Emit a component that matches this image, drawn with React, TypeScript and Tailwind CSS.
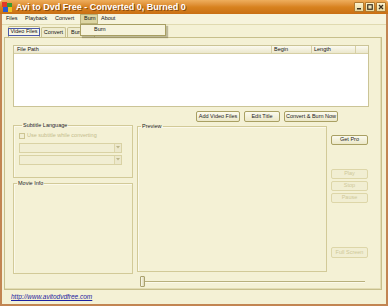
import React from "react";

const btn =
  "h-[10px] flex items-center justify-center whitespace-nowrap rounded-[2px] border border-[#a9a063] bg-gradient-to-b from-[#fbfaee] to-[#ece8c8] text-[5.5px] leading-none text-[#222]";
const btnOff =
  "h-[10px] flex items-center justify-center whitespace-nowrap rounded-[2px] border border-[#ddd6a8] bg-[#f1eed2] text-[5.5px] leading-none text-[#cfc898]";

function AppIcon() {
  return (
    <svg width="11" height="11" viewBox="0 0 11 11">
      <rect x="0" y="0" width="5" height="5" fill="#e03a2a" />
      <rect x="5" y="1" width="5" height="4" fill="#3a9a30" />
      <rect x="1" y="5" width="5" height="5" fill="#2a5ad0" />
      <rect x="6" y="5" width="4" height="5" fill="#f0c020" />
    </svg>
  );
}

function WinButton({ kind }: { kind: "min" | "max" | "close" }) {
  return (
    <div className="w-[10px] h-[10px] flex items-center justify-center rounded-[1px] border border-[#b07a30] bg-gradient-to-b from-[#fbf3cf] to-[#e8d79c]">
      <svg width="6" height="6" viewBox="0 0 6 6">
        {kind === "min" && <rect x="1" y="4" width="4" height="1.5" fill="#3a3020" />}
        {kind === "max" && <rect x="0.75" y="0.75" width="4.5" height="4.5" fill="none" stroke="#3a3020" strokeWidth="1.2" />}
        {kind === "close" && <path d="M1 1L5 5M5 1L1 5" stroke="#3a3020" strokeWidth="1.3" />}
      </svg>
    </div>
  );
}

function Legend({ children }: { children: React.ReactNode }) {
  return <legend className="ml-[3px] px-[1px] text-[5.5px] leading-none text-[#222] whitespace-nowrap">{children}</legend>;
}

function Combo() {
  return (
    <div className="w-[103px] h-[10px] flex border border-[#d9d2a4] bg-[#f1eed3]">
      <div className="flex-1" />
      <div className="w-[7px] flex items-center justify-center border-l border-[#ddd6aa] bg-[#ece8cc]">
        <svg width="4" height="3" viewBox="0 0 4 3">
          <path d="M0 0H4L2 2.5Z" fill="#bdb68a" />
        </svg>
      </div>
    </div>
  );
}

export default function App() {
  const menu = [
    { label: "Files", w: "w-[19px]" },
    { label: "Playback", w: "w-[30px]" },
    { label: "Convert", w: "w-[28px]" },
    { label: "Burn", w: "w-[18px]", active: true },
    { label: "About", w: "w-[22px]" },
  ];

  return (
    <div className="w-[388px] h-[306px] flex flex-col font-['Liberation_Sans',Arial,sans-serif] select-none whitespace-nowrap">
      {/* title bar */}
      <div className="h-[14px] flex items-center pl-[2px] pr-[2px] rounded-t-[3px] bg-gradient-to-b from-[#eeae5c] via-[#d8831f] to-[#c96f14]">
        <AppIcon />
        <span className="ml-[3px] text-[9px] font-bold leading-none text-white [text-shadow:1px_1px_0_#8a4a0a]">
          Avi to Dvd Free - Converted 0, Burned 0
        </span>
        <div className="ml-auto flex gap-[1px]">
          <WinButton kind="min" />
          <WinButton kind="max" />
          <WinButton kind="close" />
        </div>
      </div>

      <div className="relative flex-1 flex flex-col border-x-2 border-b-2 border-[#c28552] bg-[#f4f1d5]">
        {/* menu */}
        <div className="h-[11px] flex items-stretch pl-[1px] border-b border-[#e0dab0] bg-[#f6f3dc]">
          {menu.map((m) => (
            <div
              key={m.label}
              className={`${m.w} flex items-center pl-[3px] text-[5.5px] leading-none text-[#111] ${
                m.active ? "bg-[#dcd5a2] border border-[#b9b078]" : ""
              }`}
            >
              {m.label}
            </div>
          ))}
        </div>

        {/* dropdown */}
        <div className="absolute left-[78px] top-[10px] w-[86px] h-[12px] flex items-center pl-[13px] border border-[#a79e62] bg-[#f6f3dc] text-[5.5px] leading-none text-[#111] shadow-[2px_2px_1px_rgba(90,80,40,0.35)]">
          Burn
        </div>

        {/* tabs */}
        <div className="h-[12px] flex items-end gap-[1px] pl-[6px]">
          <div className="w-[32px] h-[11px] flex items-center justify-center border border-b-0 border-[#bfb784] bg-[#f8f6e4] rounded-t-[2px]">
            <span className="px-[1px] border border-[#4c5aa8] text-[5.5px] leading-none text-[#111]">Video Files</span>
          </div>
          <div className="w-[25px] h-[10px] flex items-center justify-center border border-b-0 border-[#c9c190] bg-[#efecd0] rounded-t-[2px] text-[5.5px] leading-none text-[#111]">
            Convert
          </div>
          <div className="w-[28px] h-[10px] flex items-center pl-[3px] border border-b-0 border-[#c9c190] bg-[#efecd0] rounded-t-[2px] text-[5.5px] leading-none text-[#111]">
            Burn
          </div>
        </div>

        {/* tab panel */}
        <div className="ml-[2px] w-[378px] h-[253px] flex flex-col border border-[#c7bf8b] shadow-[inset_-1px_-1px_0_#e2dcb4] bg-[#f4f1d5]">
          {/* list */}
          <div className="ml-[8px] mt-[7px] w-[356px] h-[62px] flex flex-col border border-[#cbc496] bg-white">
            <div className="h-[8px] flex bg-gradient-to-b from-[#fbfaf0] to-[#ebe7cc] border-b border-[#d6cfa4] text-[5.5px] leading-none text-[#111]">
              <div className="w-[258px] flex items-center pl-[3px] border-r border-[#d6cfa4]">File Path</div>
              <div className="w-[40px] flex items-center pl-[2px] border-r border-[#d6cfa4]">Begin</div>
              <div className="w-[44px] flex items-center pl-[2px] border-r border-[#d6cfa4]">Length</div>
              <div className="flex-1" />
            </div>
          </div>

          {/* action buttons */}
          <div className="mt-[4px] ml-[191px] flex gap-[4px]">
            <div className={`${btn} w-[44px] h-[11px]`}>Add Video Files</div>
            <div className={`${btn} w-[36px] h-[11px]`}>Edit Title</div>
            <div className={`${btn} w-[54px] h-[11px]`}>Convert &amp; Burn Now</div>
          </div>

          {/* main row */}
          <div className="ml-[8px] flex gap-[4px]">
            {/* left column */}
            <div className="w-[120px] flex flex-col">
              <fieldset className="mt-[1px] h-[55px] border border-[#d2ca98] shadow-[inset_1px_1px_0_#fbf9ea] px-[5px] flex flex-col">
                <Legend>Subtitle Language</Legend>
                <div className="mt-[4px] flex items-center gap-[2px]">
                  <div className="w-[6px] h-[6px] border border-[#cdc593] bg-[#f1eed3]" />
                  <span className="text-[5.5px] leading-none text-[#c4bc8c]">Use subtitle while converting</span>
                </div>
                <div className="mt-[4px] flex flex-col gap-[2px]">
                  <Combo />
                  <Combo />
                </div>
              </fieldset>
              <fieldset className="mt-[3px] h-[93px] border border-[#d2ca98] shadow-[inset_1px_1px_0_#fbf9ea]">
                <Legend>Movie Info</Legend>
              </fieldset>
            </div>

            {/* preview + controls */}
            <div className="w-[232px] flex flex-col">
              <div className="flex gap-[4px]">
                <fieldset className="mt-[2px] w-[190px] h-[148px] border border-[#d2ca98] shadow-[inset_1px_1px_0_#fbf9ea]">
                  <Legend>Preview</Legend>
                </fieldset>
                <div className="w-[37px] flex flex-col">
                  <div className={`${btn} mt-[13px]`}>Get Pro</div>
                  <div className={`${btnOff} mt-[24px]`}>Play</div>
                  <div className={`${btnOff} mt-[2px]`}>Stop</div>
                  <div className={`${btnOff} mt-[2px]`}>Pause</div>
                  <div className={`${btnOff} mt-[44px] h-[11px]`}>Full Screen</div>
                </div>
              </div>
              {/* slider */}
              <div className="mt-[4px] ml-[3px] h-[11px] flex items-center">
                <div className="w-[5px] h-[11px] rounded-[1px] border border-[#aaa170] bg-gradient-to-r from-[#fbfaee] to-[#ddd7b0]" />
                <div className="w-[220px] h-[2px] border-t border-[#b8b07c] border-b border-b-[#fbf9ea]" />
              </div>
            </div>
          </div>
        </div>

        {/* link */}
        <div className="ml-[9px] mt-[4px] text-[6.5px] italic leading-none text-[#1d22a0] underline">
          http://www.avitodvdfree.com
        </div>
      </div>
    </div>
  );
}
